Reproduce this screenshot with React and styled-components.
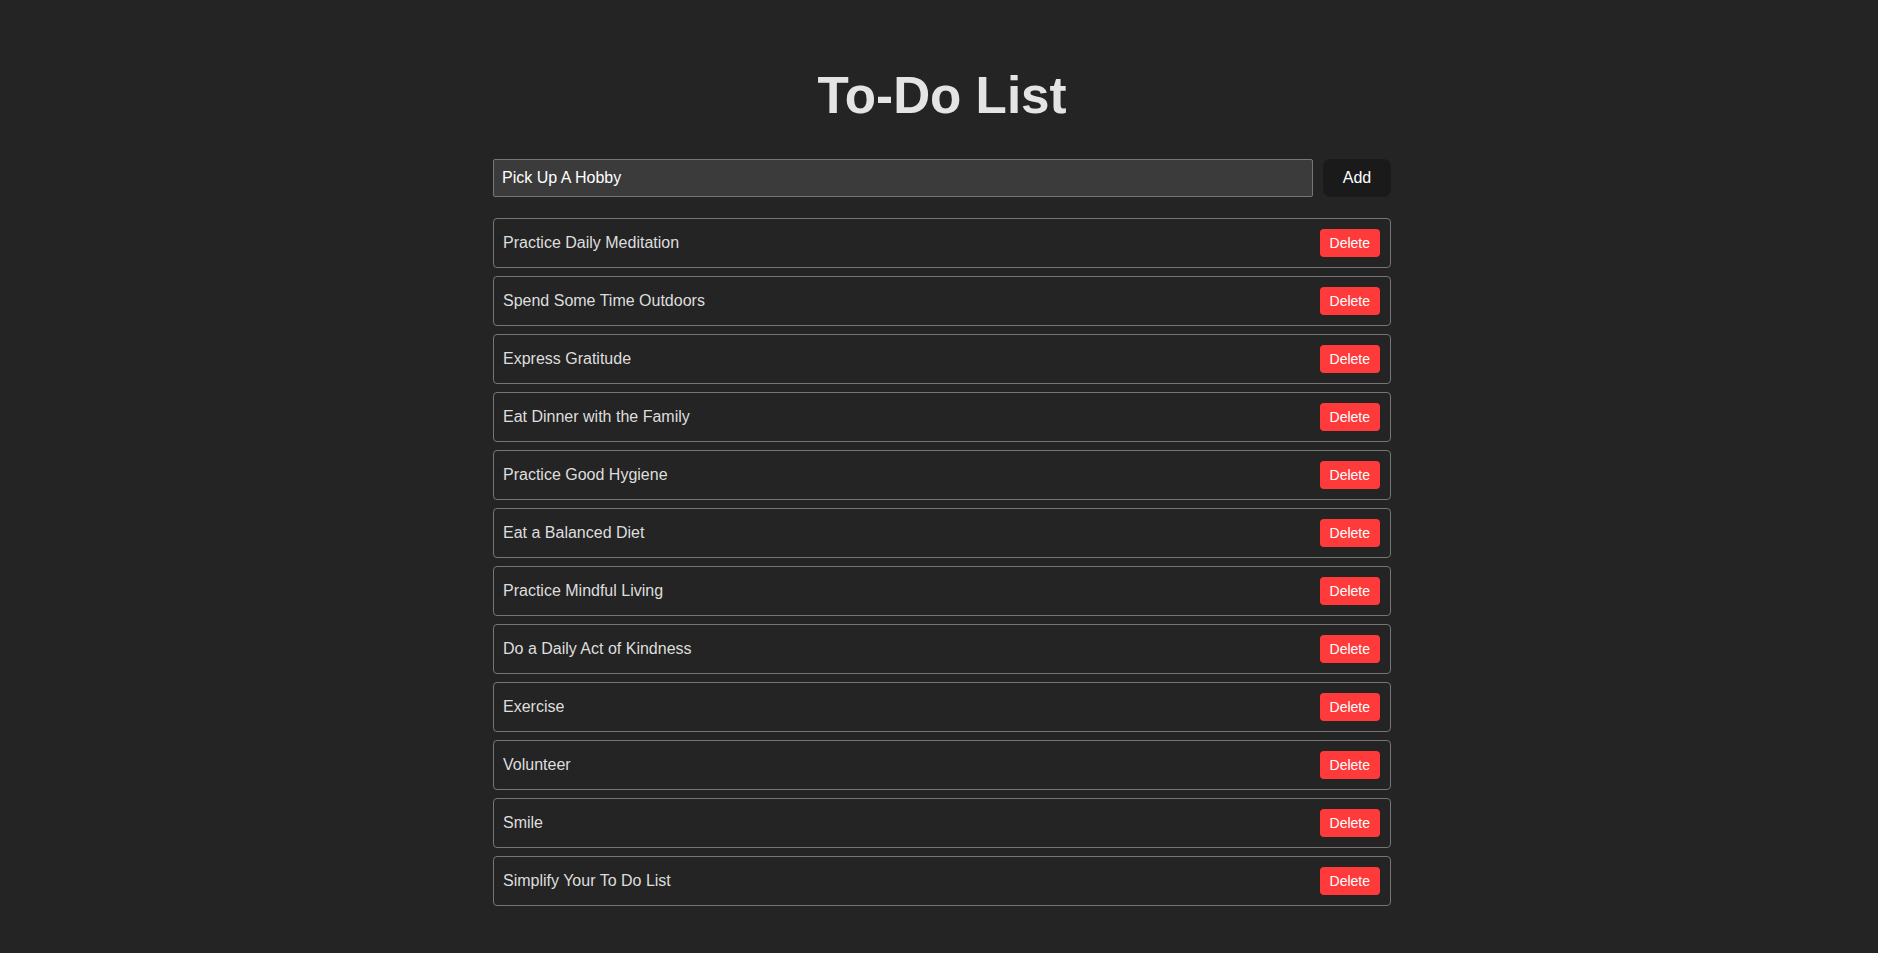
import React, { useState } from 'react';
import styled, { createGlobalStyle } from 'styled-components';

const GlobalStyle = createGlobalStyle`
  body {
    margin: 0;
    background: #242424;
    color: rgba(255, 255, 255, 0.87);
    font-family: "Liberation Sans", Arial, sans-serif;
  }
`;

const initialTodos = [
  'Practice Daily Meditation',
  'Spend Some Time Outdoors',
  'Express Gratitude',
  'Eat Dinner with the Family',
  'Practice Good Hygiene',
  'Eat a Balanced Diet',
  'Practice Mindful Living',
  'Do a Daily Act of Kindness',
  'Exercise',
  'Volunteer',
  'Smile',
  'Simplify Your To Do List',
];

const App = () => {
  const [todos, setTodos] = useState(initialTodos);
  const [inputValue, setInputValue] = useState('Pick Up A Hobby');

  const handleAdd = () => {
    if (inputValue.trim()) {
      setTodos([...todos, inputValue.trim()]);
      setInputValue('');
    }
  };

  const handleDelete = (index) => {
    setTodos(todos.filter((_, i) => i !== index));
  };

  return (
    <Page>
      <GlobalStyle />
      <Wrapper>
        <Title>To-Do List</Title>
        <Form>
          <Input value={inputValue} onChange={(e) => setInputValue(e.target.value)} />
          <AddButton onClick={handleAdd}>Add</AddButton>
        </Form>
        <List>
          {todos.map((todo, i) => (
            <Item key={i}>
              <ItemText>{todo}</ItemText>
              <DeleteButton onClick={() => handleDelete(i)}>Delete</DeleteButton>
            </Item>
          ))}
        </List>
      </Wrapper>
    </Page>
  );
};

const Page = styled.div`
  padding: 32px 0 40px 6px;
`;

const Wrapper = styled.div`
  width: 898px;
  margin: 0 auto;
`;

const Title = styled.h1`
  margin: 36px 0 35px;
  font-size: 51.2px;
  line-height: 1.1;
  font-weight: bold;
  text-align: center;
  color: #e4e4e4;
`;

const Form = styled.div`
  display: flex;
  gap: 10px;
  margin-bottom: 21px;
`;

const Input = styled.input`
  flex: 1;
  height: 38px;
  box-sizing: border-box;
  padding: 0 8px;
  background: #3b3b3b;
  border: 1px solid #767676;
  border-radius: 2px;
  color: #fff;
  font-family: inherit;
  font-size: 16px;
  outline: none;
`;

const AddButton = styled.button`
  width: 68px;
  height: 38px;
  border: none;
  border-radius: 8px;
  background: #1a1a1a;
  color: #fff;
  font-family: inherit;
  font-size: 16px;
  cursor: pointer;
`;

const List = styled.ul`
  list-style: none;
  margin: 0;
  padding: 0;
  display: flex;
  flex-direction: column;
  gap: 8px;
`;

const Item = styled.li`
  display: flex;
  align-items: center;
  justify-content: space-between;
  height: 50px;
  box-sizing: border-box;
  padding: 0 10px 0 9px;
  border: 1px solid #767676;
  border-radius: 4px;
`;

const ItemText = styled.span`
  font-size: 16px;
  color: #dedede;
`;

const DeleteButton = styled.button`
  height: 28px;
  padding: 0 10px;
  border: none;
  border-radius: 4px;
  background: #ff3a3a;
  color: #fff;
  font-family: inherit;
  font-size: 14px;
  cursor: pointer;
`;

export default App;
